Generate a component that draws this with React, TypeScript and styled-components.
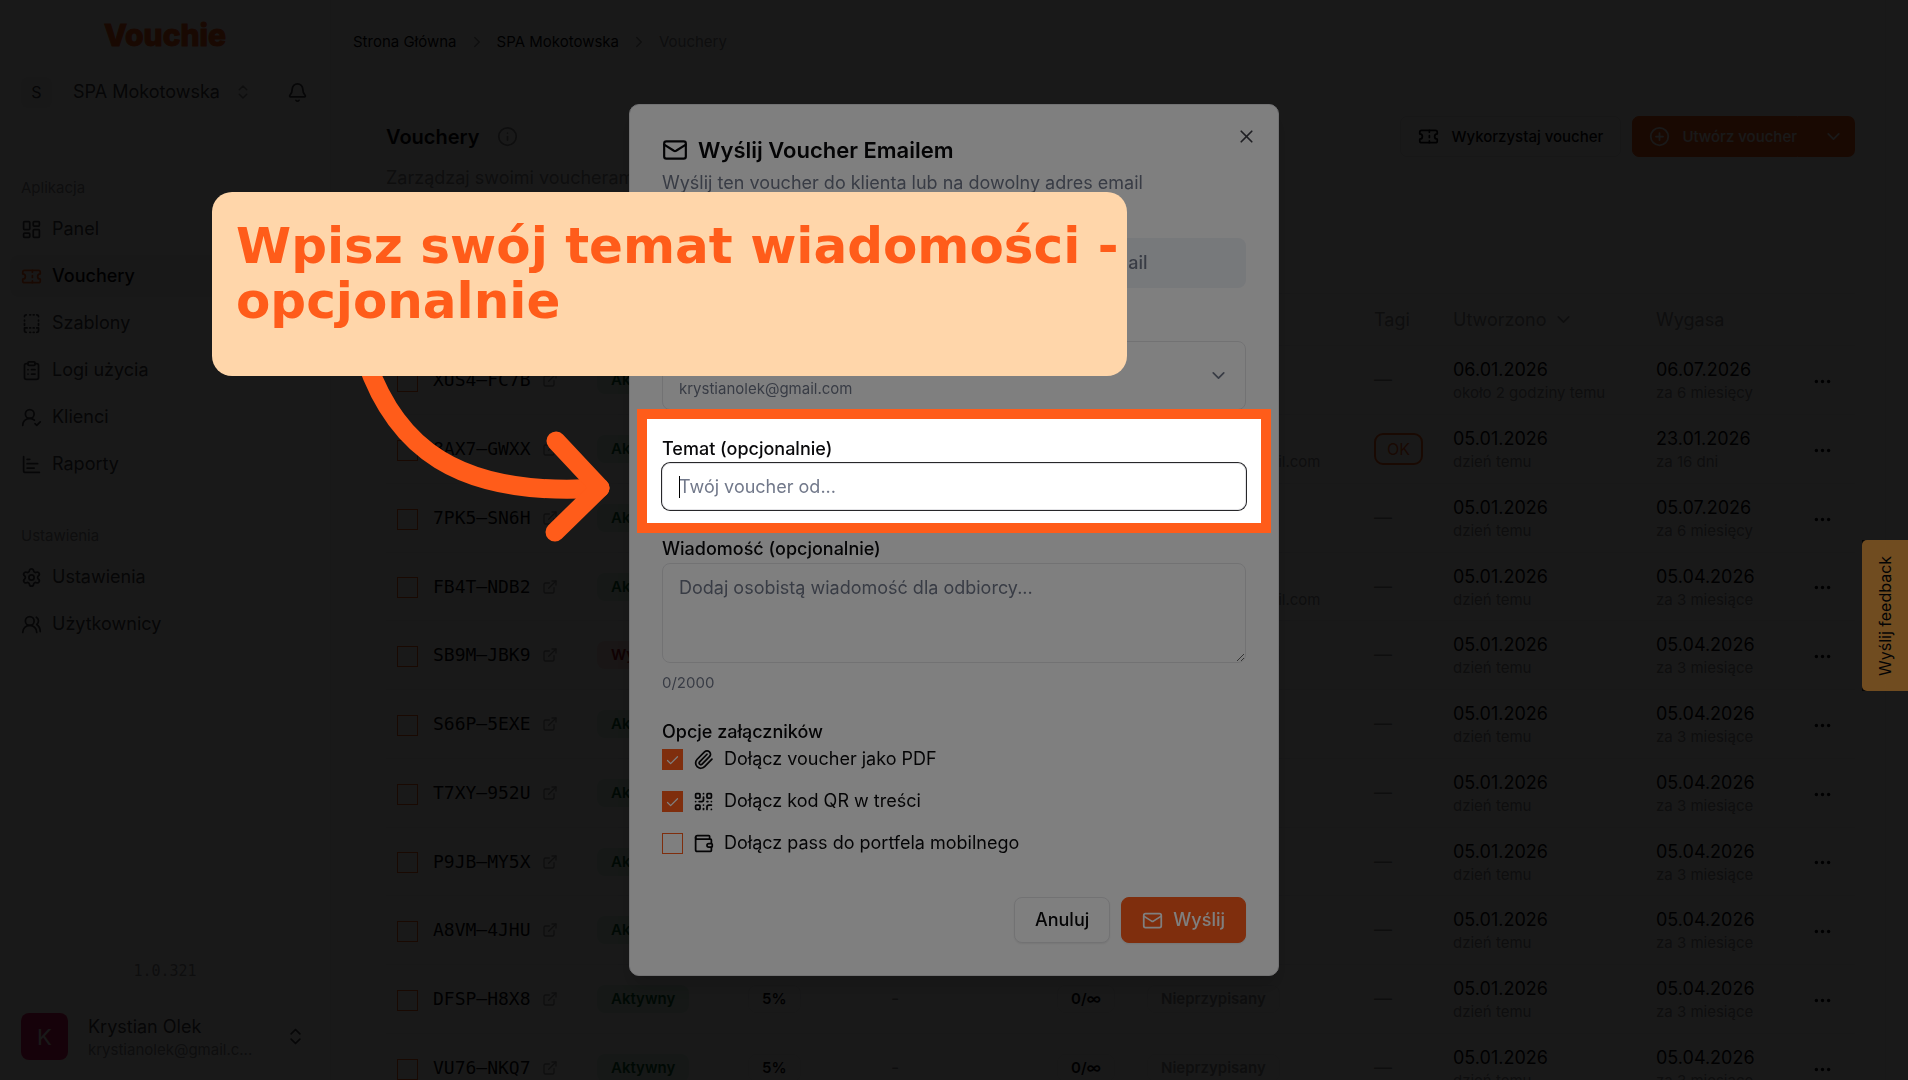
import React from 'react';
import styled, { createGlobalStyle, css } from 'styled-components';
import {
  Bell,
  ChartBar,
  Check,
  ChevronDown,
  ChevronRight,
  ChevronsUpDown,
  CirclePlus,
  ClipboardList,
  Ellipsis,
  ExternalLink,
  Info,
  LayoutDashboard,
  Mail,
  Paperclip,
  QrCode,
  Settings,
  Ticket,
  UserRoundCheck,
  UsersRound,
  Wallet,
  X,
} from 'lucide-react';

const c = {
  text: '#09090b',
  soft: '#3f3f46',
  faint: '#8c8c92',
  muted: '#71788a',
  line: '#e4e4e7',
  hairline: '#f0f0f1',
  orange: '#ff5c1a',
  peach: '#ffd6aa',
};

const sans = `Inter, "Liberation Sans", sans-serif`;
const mono = `"DejaVu Sans Mono", "Liberation Mono", monospace`;

const GlobalStyle = createGlobalStyle`
  *, *::before, *::after { box-sizing: border-box; }
  body {
    margin: 0;
    overflow: hidden;
    background: #fff;
    color: ${c.text};
    font: 400 18px/26px ${sans};
  }
  button, input, textarea { font: inherit; color: inherit; margin: 0; }
  button { cursor: pointer; background: none; border: 0; padding: 0; }
  h1, h2, p { margin: 0; }
  a { color: inherit; text-decoration: none; }
  svg { flex: none; display: block; }
`;

/* ---------- application shell ---------- */

const Shell = styled.div`
  display: flex;
  height: 100vh;
  overflow: hidden;
`;

const Sidebar = styled.aside`
  flex: none;
  width: 330px;
  padding: 17px 10px 20px;
  display: flex;
  flex-direction: column;
`;

const Logo = styled.div`
  text-align: center;
  font: 800 30px/36px ${sans};
  color: ${c.orange};
  -webkit-text-stroke: 1px ${c.orange};
`;

const TeamRow = styled.div`
  display: flex;
  align-items: center;
  height: 42px;
  margin-top: 18px;
  padding: 0 12px 0 11px;
  color: ${c.soft};
`;

const TeamSwitch = styled.button`
  display: flex;
  align-items: center;
  text-align: left;
  svg {
    margin-left: 14px;
    color: ${c.faint};
  }
`;

const TeamMark = styled.span`
  width: 31px;
  height: 31px;
  margin-right: 21px;
  border-radius: 6px;
  display: grid;
  place-items: center;
  background: #f4f4f5;
  font-size: 16px;
`;

const BellButton = styled.button`
  margin-left: auto;
`;

const Nav = styled.nav`
  margin-top: 54px;
  display: flex;
  flex-direction: column;
  gap: 30px;
`;

const NavLabel = styled.div`
  height: 41px;
  padding-left: 11px;
  font-size: 15px;
  line-height: 41px;
  color: ${c.faint};
`;

const NavList = styled.div`
  display: flex;
  flex-direction: column;
  gap: 5px;
`;

const NavLink = styled.a<{ $active?: boolean }>`
  display: flex;
  align-items: center;
  gap: 10px;
  height: 42px;
  padding-left: 11px;
  border-radius: 8px;
  color: ${c.soft};
  ${(p) =>
    p.$active &&
    css`
      background: #f4f4f5;
      color: ${c.text};
      font-weight: 500;
      svg {
        color: ${c.orange};
      }
    `}
`;

const SidebarFoot = styled.div`
  margin-top: auto;
`;

const Version = styled.div`
  text-align: center;
  font: 400 15px/24px ${mono};
  color: ${c.faint};
`;

const UserButton = styled.button`
  display: flex;
  align-items: center;
  width: 100%;
  height: 47px;
  margin-top: 30px;
  padding: 0 14px 0 11px;
  text-align: left;
  color: ${c.soft};
`;

const Avatar = styled.span`
  width: 47px;
  height: 47px;
  margin-right: 20px;
  border-radius: 8px;
  display: grid;
  place-items: center;
  background: #e11d63;
  color: #fff;
  font-size: 22px;
`;

const UserText = styled.span`
  width: 170px;
  margin-right: auto;
  display: flex;
  flex-direction: column;
`;

const Small = styled.span`
  font-size: 15px;
  line-height: 20px;
  color: ${c.faint};
  white-space: nowrap;
  overflow: hidden;
  text-overflow: ellipsis;
`;

const Main = styled.main`
  flex: 1;
  min-width: 0;
  margin-right: 22px;
  border: solid ${c.hairline};
  border-width: 0 1px;
`;

const Breadcrumb = styled.nav`
  display: flex;
  align-items: center;
  gap: 11px;
  height: 83px;
  padding-left: 22px;
  font-size: 15px;
  line-height: 20px;
  svg {
    color: ${c.faint};
  }
`;

const Current = styled.span`
  color: ${c.faint};
`;

const Content = styled.section`
  padding: 33px 30px 0 55px;
`;

const PageHead = styled.header`
  display: flex;
  align-items: flex-start;
  justify-content: space-between;
  height: 177px;
`;

const TitleRow = styled.div`
  display: flex;
  align-items: center;
  gap: 17px;
  height: 41px;
  svg {
    color: ${c.faint};
  }
`;

const PageTitle = styled.h1`
  font-size: 20px;
  font-weight: 600;
`;

const PageNote = styled.p`
  margin-top: 8px;
  color: ${c.faint};
`;

const HeadActions = styled.div`
  display: flex;
  gap: 11px;
`;

const HeadButton = styled.button<{ $primary?: boolean }>`
  display: flex;
  align-items: center;
  gap: 12px;
  height: 41px;
  padding: 0 17px;
  border-radius: 7px;
  border: 1px solid ${c.line};
  font-size: 15px;
  font-weight: 500;
  ${(p) =>
    p.$primary &&
    css`
      background: ${c.orange};
      border-color: ${c.orange};
      color: #fff;
      padding: 0 0 0 16px;
    `}
`;

const SplitGroup = styled.div`
  display: flex;
  ${HeadButton} {
    border-radius: 7px 0 0 7px;
  }
`;

const SplitToggle = styled.button`
  width: 57px;
  display: grid;
  place-items: center;
  padding-left: 14px;
  border-radius: 0 7px 7px 0;
  background: ${c.orange};
  color: #fff;
`;

/* ---------- table ---------- */

const Table = styled.table`
  width: 100%;
  table-layout: fixed;
  border-collapse: collapse;
  border-top: 1px solid ${c.hairline};
`;

const Col = styled.col<{ $w?: number }>`
  width: ${(p) => (p.$w ? `${p.$w}px` : 'auto')};
`;

const Th = styled.th`
  height: 52px;
  padding: 0 11px;
  text-align: left;
  font-weight: 400;
  color: ${c.faint};
  border-bottom: 1px solid ${c.hairline};
`;

const SortButton = styled.button`
  display: flex;
  align-items: center;
  gap: 7px;
`;

const Td = styled.td<{ $center?: boolean }>`
  height: 69px;
  padding: 0 11px;
  white-space: nowrap;
  text-align: ${(p) => (p.$center ? 'center' : 'left')};
  border-bottom: 1px solid ${c.hairline};
  tr:nth-child(4n) > & {
    height: 68px;
  }
`;

const Stack = styled.div`
  display: flex;
  flex-direction: column;
`;

const CodeCell = styled.div`
  display: flex;
  align-items: center;
  gap: 11px;
  font-family: ${mono};
  svg {
    color: ${c.faint};
  }
`;

type Tone = 'green' | 'red' | 'plain' | 'muted';
const tones: Record<Tone, [string, string, string]> = {
  green: ['#d9f5e5', '#05602f', 'transparent'],
  red: ['#fbdcdc', '#a30b1c', 'transparent'],
  plain: ['transparent', c.text, c.hairline],
  muted: ['transparent', c.faint, c.hairline],
};

const Badge = styled.span<{ $tone: Tone }>`
  display: inline-block;
  padding: 3px 13px;
  border-radius: 8px;
  border: 1px solid ${(p) => tones[p.$tone][2]};
  background: ${(p) => tones[p.$tone][0]};
  color: ${(p) => tones[p.$tone][1]};
  font-size: 15px;
  font-weight: 600;
  line-height: 20px;
`;

const Tag = styled.span`
  display: inline-block;
  padding: 3px 11px;
  border: 2px solid ${c.orange};
  border-radius: 9px;
  color: ${c.orange};
  font-size: 16px;
  line-height: 22px;
`;

const Faint = styled.span`
  color: ${c.faint};
`;

const RowMenu = styled.button`
  display: inline-grid;
  vertical-align: middle;
`;

/* ---------- checkbox ---------- */

const Tick = styled.span`
  position: relative;
  display: inline-grid;
  flex: none;
  vertical-align: middle;
  svg {
    position: absolute;
    inset: 4px 3px;
    color: #fff;
    pointer-events: none;
  }
`;

const TickInput = styled.input`
  appearance: none;
  width: 21px;
  height: 21px;
  border: 1px solid ${c.orange};
  &:checked {
    background: ${c.orange};
  }
`;

const Checkbox = (p: { id?: string; label?: string; on?: boolean }) => (
  <Tick>
    <TickInput type="checkbox" id={p.id} aria-label={p.label} defaultChecked={p.on} />
    {p.on && <Check size={15} strokeWidth={2} />}
  </Tick>
);

/* ---------- layers ---------- */

const Backdrop = styled.div`
  position: fixed;
  inset: 0;
  z-index: 30;
  background: rgba(0, 0, 0, 0.8);
`;

const Feedback = styled.button`
  position: fixed;
  z-index: 40;
  right: 0;
  top: 50%;
  height: 151px;
  width: 46px;
  border-radius: 0 5px 5px 0;
  background: #e09840;
  writing-mode: vertical-rl;
  transform: rotate(180deg);
  font-size: 16px;
  font-weight: 400;
`;

const DialogLayer = styled.div`
  position: fixed;
  inset: 0;
  z-index: 50;
  display: flex;
  align-items: center;
  justify-content: center;
`;

const Dialog = styled.div`
  position: relative;
  width: 650px;
  padding: 32px;
  border: 1px solid ${c.line};
  border-radius: 10px;
  background: #fff;
  box-shadow: 0 12px 20px rgba(0, 0, 0, 0.15);
`;

const CloseButton = styled.button`
  position: absolute;
  top: 20px;
  right: 20px;
  padding: 1px;
  color: ${c.soft};
`;

const DialogTitle = styled.h2`
  display: flex;
  align-items: center;
  gap: 10px;
  height: 25px;
  font-size: 22px;
  font-weight: 600;
  line-height: 24px;
`;

const DialogNote = styled.p`
  margin-top: 8px;
  color: ${c.muted};
`;

const Tabs = styled.div`
  display: grid;
  grid-template-columns: 1fr 1fr;
  height: 50px;
  margin-top: 42px;
  padding: 5px;
  border-radius: 8px;
  background: #eff2f7;
`;

const Tab = styled.button<{ $active?: boolean }>`
  border-radius: 5px;
  font-weight: 500;
  color: ${(p) => (p.$active ? c.text : c.muted)};
  background: ${(p) => (p.$active ? '#fff' : 'transparent')};
`;

const Form = styled.form`
  display: flex;
  flex-direction: column;
  gap: 27px;
  margin-top: 27px;
`;

const Field = styled.div`
  position: relative;
  display: flex;
  flex-direction: column;
  gap: 2px;
`;

const Label = styled.label`
  font-weight: 500;
  line-height: 24px;
`;

const boxed = css`
  width: 100%;
  border: 1px solid ${c.line};
  border-radius: 8px;
  background: #fff;
  padding: 0 16px;
`;

const ClientSelect = styled.button`
  ${boxed}
  display: flex;
  align-items: center;
  justify-content: space-between;
  height: 69px;
  text-align: left;
  svg {
    color: ${c.muted};
  }
`;

const ClientMail = styled(Small)`
  color: ${c.muted};
`;

const SubjectInput = styled.input`
  ${boxed}
  height: 47px;
  outline: none;
  box-shadow: 0 0 0 1px #27272a;
  &::placeholder {
    color: ${c.muted};
    opacity: 1;
  }
`;

const Caret = styled.span`
  position: absolute;
  left: 17px;
  bottom: 12px;
  width: 1px;
  height: 22px;
  background: #000;
`;

const Message = styled.textarea`
  ${boxed}
  display: block;
  height: 100px;
  padding: 11px 16px;
  resize: vertical;
  &::placeholder {
    color: ${c.muted};
    opacity: 1;
  }
`;

const Counter = styled.span`
  margin-top: 8px;
  font-size: 15px;
  line-height: 20px;
  color: ${c.muted};
`;

const Options = styled.div`
  display: flex;
  flex-direction: column;
  gap: 16px;
`;

const GroupTitle = styled.div`
  font-weight: 500;
  line-height: 24px;
`;

const OptionLabel = styled.label`
  display: flex;
  align-items: center;
  gap: 10px;
  height: 26px;
`;

const DialogActions = styled.footer`
  display: flex;
  justify-content: flex-end;
  gap: 11px;
  margin-top: 14px;
`;

const ActionButton = styled.button<{ $primary?: boolean }>`
  display: flex;
  align-items: center;
  gap: 10px;
  height: 46px;
  padding: 0 20px;
  border: 1px solid ${(p) => (p.$primary ? c.orange : c.line)};
  border-radius: 8px;
  background: ${(p) => (p.$primary ? c.orange : '#fff')};
  color: ${(p) => (p.$primary ? '#fff' : c.text)};
  font-weight: 500;
  box-shadow: 0 1px 2px rgba(0, 0, 0, 0.08);
`;

/* ---------- guided tour ---------- */

const Spotlight = styled.div`
  position: absolute;
  inset: -28px -25px -23px;
  border: 10px solid ${c.orange};
  box-shadow: 0 0 0 9999px rgba(0, 0, 0, 0.5);
  pointer-events: none;
  z-index: 1;
`;

const Arrow = styled.svg`
  position: absolute;
  z-index: 2;
  left: -280px;
  top: 255px;
  fill: none;
  stroke: ${c.orange};
  stroke-width: 19;
  stroke-linecap: round;
  stroke-linejoin: round;
`;

const Callout = styled.div`
  position: absolute;
  z-index: 3;
  left: -418px;
  top: 87px;
  width: 915px;
  height: 184px;
  padding: 27px 3px 0 24px;
  border-radius: 20px;
  background: ${c.peach};
  color: ${c.orange};
  font: 700 50px/55px "DejaVu Sans", Lexend, sans-serif;
`;

/* ---------- data ---------- */

const TemplateIcon = () => (
  <svg width="21" height="21" viewBox="0 0 24 24" fill="none" stroke="currentColor" strokeWidth="2" strokeLinecap="round" strokeLinejoin="round">
    <path d="M4 4a2 2 0 0 1 2-2M10 2h1M14 2h1M18 2a2 2 0 0 1 2 2M4 8v1M4 12v2M20 8v1M20 12v2M4 17v3a2 2 0 0 0 2 2M20 17v3a2 2 0 0 1-2 2M10 22h1M14 22h1M4 17h3M10 17h1M14 17h1M18 17h2" />
  </svg>
);

const appLinks = [
  ['Panel', LayoutDashboard],
  ['Vouchery', Ticket],
  ['Szablony', TemplateIcon],
  ['Logi użycia', ClipboardList],
  ['Klienci', UserRoundCheck],
  ['Raporty', ChartBar],
] as const;

const settingLinks = [
  ['Ustawienia', Settings],
  ['Użytkownicy', UsersRound],
] as const;

type Row = {
  code: string;
  expired?: boolean;
  client?: boolean;
  tag?: string;
  created?: [string, string];
  ends?: [string, string];
};

const rows: Row[] = [
  { code: 'XUS4–FC7B', created: ['06.01.2026', 'około 2 godziny temu'], ends: ['06.07.2026', 'za 6 miesięcy'] },
  { code: '8AX7–GWXX', client: true, tag: 'OK', ends: ['23.01.2026', 'za 16 dni'] },
  { code: '7PK5–SN6H', ends: ['05.07.2026', 'za 6 miesięcy'] },
  { code: 'FB4T–NDB2', client: true },
  { code: 'SB9M–JBK9', expired: true },
  { code: 'S66P–5EXE' },
  { code: 'T7XY–952U' },
  { code: 'P9JB–MY5X' },
  { code: 'A8VM–4JHU' },
  { code: 'DFSP–H8X8' },
  { code: 'VU76–NKQ7' },
];

const DateCell = ({ value }: { value: [string, string] }) => (
  <Stack>
    <span>{value[0]}</span>
    <Small>{value[1]}</Small>
  </Stack>
);

const VoucherRow = ({ row }: { row: Row }) => (
  <tr>
    <Td>
      <Checkbox label={row.code} />
    </Td>
    <Td>
      <CodeCell>
        {row.code}
        <ExternalLink size={16} />
      </CodeCell>
    </Td>
    <Td>
      <Badge $tone={row.expired ? 'red' : 'green'}>{row.expired ? 'Wygasły' : 'Aktywny'}</Badge>
    </Td>
    <Td>
      <Badge $tone="plain">5%</Badge>
    </Td>
    <Td>
      <Faint>-</Faint>
    </Td>
    <Td>
      <Badge $tone="plain">0/∞</Badge>
    </Td>
    <Td>
      {row.client ? (
        <Stack>
          <span>Krystian Olek</span>
          <Small>krystianolek@gmail.com</Small>
        </Stack>
      ) : (
        <Badge $tone="muted">Nieprzypisany</Badge>
      )}
    </Td>
    <Td>{row.tag ? <Tag>{row.tag}</Tag> : <Faint>—</Faint>}</Td>
    <Td>
      <DateCell value={row.created ?? ['05.01.2026', 'dzień temu']} />
    </Td>
    <Td>
      <DateCell value={row.ends ?? ['05.04.2026', 'za 3 miesiące']} />
    </Td>
    <Td $center>
      <RowMenu aria-label="Więcej">
        <Ellipsis size={21} strokeWidth={2} />
      </RowMenu>
    </Td>
  </tr>
);

const columns = [36, 164, 151, 143, 166, 90, undefined, 79, 203, 144, 66];
const options = [
  ['pdf', 'Dołącz voucher jako PDF', Paperclip, true],
  ['qr', 'Dołącz kod QR w treści', QrCode, true],
  ['wallet', 'Dołącz pass do portfela mobilnego', Wallet, false],
] as const;

export default function App() {
  return (
    <>
      <GlobalStyle />
      <Shell>
        <Sidebar>
          <Logo>Vouchie</Logo>
          <TeamRow>
            <TeamSwitch>
              <TeamMark>S</TeamMark>
              SPA Mokotowska
              <ChevronsUpDown size={18} />
            </TeamSwitch>
            <BellButton aria-label="Powiadomienia">
              <Bell size={21} />
            </BellButton>
          </TeamRow>
          <Nav>
            <div>
              <NavLabel>Aplikacja</NavLabel>
              <NavList>
                {appLinks.map(([name, Icon]) => (
                  <NavLink key={name} href="#" $active={name === 'Vouchery'}>
                    <Icon size={21} />
                    {name}
                  </NavLink>
                ))}
              </NavList>
            </div>
            <div>
              <NavLabel>Ustawienia</NavLabel>
              <NavList>
                {settingLinks.map(([name, Icon]) => (
                  <NavLink key={name} href="#">
                    <Icon size={21} />
                    {name}
                  </NavLink>
                ))}
              </NavList>
            </div>
          </Nav>
          <SidebarFoot>
            <Version>1.0.321</Version>
            <UserButton>
              <Avatar>K</Avatar>
              <UserText>
                <span>Krystian Olek</span>
                <Small>krystianolek@gmail.c...</Small>
              </UserText>
              <ChevronsUpDown size={21} />
            </UserButton>
          </SidebarFoot>
        </Sidebar>
        <Main>
          <Breadcrumb>
            <a href="#">Strona Główna</a>
            <ChevronRight size={18} />
            <a href="#">SPA Mokotowska</a>
            <ChevronRight size={18} />
            <Current>Vouchery</Current>
          </Breadcrumb>
          <Content>
            <PageHead>
              <div>
                <TitleRow>
                  <PageTitle>Vouchery</PageTitle>
                  <Info size={21} strokeWidth={2} />
                </TitleRow>
                <PageNote>Zarządzaj swoimi voucherami</PageNote>
              </div>
              <HeadActions>
                <HeadButton>
                  <Ticket size={21} />
                  Wykorzystaj voucher
                </HeadButton>
                <SplitGroup>
                  <HeadButton $primary>
                    <CirclePlus size={21} />
                    Utwórz voucher
                  </HeadButton>
                  <SplitToggle aria-label="Więcej opcji">
                    <ChevronDown size={21} />
                  </SplitToggle>
                </SplitGroup>
              </HeadActions>
            </PageHead>
            <Table>
              <colgroup>
                {columns.map((w, i) => (
                  <Col key={i} $w={w} />
                ))}
              </colgroup>
              <thead>
                <tr>
                  <Th aria-label="Zaznacz" />
                  <Th aria-label="Kod" />
                  <Th aria-label="Status" />
                  <Th aria-label="Wartość" />
                  <Th aria-label="Szablon" />
                  <Th aria-label="Użycia" />
                  <Th aria-label="Klient" />
                  <Th>Tagi</Th>
                  <Th>
                    <SortButton>
                      Utworzono
                      <ChevronDown size={21} />
                    </SortButton>
                  </Th>
                  <Th>Wygasa</Th>
                  <Th aria-label="Akcje" />
                </tr>
              </thead>
              <tbody>
                {rows.map((row) => (
                  <VoucherRow key={row.code} row={row} />
                ))}
              </tbody>
            </Table>
          </Content>
        </Main>
      </Shell>

      <Backdrop />
      <Feedback>Wyślij feedback</Feedback>

      <DialogLayer>
        <Dialog role="dialog" aria-labelledby="dialog-title">
          <CloseButton aria-label="Zamknij">
            <X size={21} strokeWidth={2} />
          </CloseButton>
          <DialogTitle id="dialog-title">
            <Mail size={26} />
            Wyślij Voucher Emailem
          </DialogTitle>
          <DialogNote>Wyślij ten voucher do klienta lub na dowolny adres email</DialogNote>
          <Tabs>
            <Tab $active aria-label="Klient" />
            <Tab>Nowy email</Tab>
          </Tabs>
          <Form onSubmit={(e) => e.preventDefault()}>
            <Field>
              <Label as="span">&nbsp;</Label>
              <ClientSelect type="button">
                <Stack>
                  <span>Krystian Olek</span>
                  <ClientMail>krystianolek@gmail.com</ClientMail>
                </Stack>
                <ChevronDown size={21} />
              </ClientSelect>
            </Field>
            <Field>
              <Label htmlFor="subject">Temat (opcjonalnie)</Label>
              <SubjectInput id="subject" placeholder="Twój voucher od..." />
              <Caret />
              <Spotlight />
            </Field>
            <Field>
              <Label htmlFor="message">Wiadomość (opcjonalnie)</Label>
              <Message id="message" placeholder="Dodaj osobistą wiadomość dla odbiorcy..." />
              <Counter>0/2000</Counter>
            </Field>
            <Field>
              <GroupTitle>Opcje załączników</GroupTitle>
              <Options>
                {options.map(([id, text, Icon, on]) => (
                  <OptionLabel key={id} htmlFor={id}>
                    <Checkbox id={id} on={on} />
                    <Icon size={21} />
                    {text}
                  </OptionLabel>
                ))}
              </Options>
            </Field>
            <DialogActions>
              <ActionButton type="button">Anuluj</ActionButton>
              <ActionButton $primary>
                <Mail size={21} />
                Wyślij
              </ActionButton>
            </DialogActions>
          </Form>
          <Arrow width="270" height="190" viewBox="350 360 270 190" aria-hidden="true">
            <path d="M366 360C395 445 455 498 600 488" />
            <path d="M556 441L600 488L555 532" />
          </Arrow>
          <Callout>Wpisz swój temat wiadomości - opcjonalnie</Callout>
        </Dialog>
      </DialogLayer>
    </>
  );
}
